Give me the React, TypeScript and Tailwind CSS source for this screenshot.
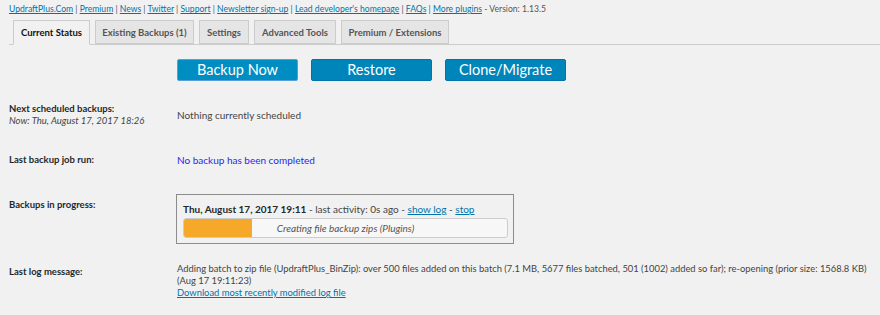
const links = [
  "UpdraftPlus.Com",
  "Premium",
  "News",
  "Twitter",
  "Support",
  "Newsletter sign-up",
  "Lead developer's homepage",
  "FAQs",
  "More plugins",
];

const tabs = [
  { label: "Current Status", w: "w-[77px]" },
  { label: "Existing Backups (1)", w: "w-[99px]" },
  { label: "Settings", w: "w-[50px]" },
  { label: "Advanced Tools", w: "w-[82px]" },
  { label: "Premium / Extensions", w: "w-[108px]" },
];

export default function App() {
  return (
    <div
      className="w-[880px] h-[315px] overflow-hidden bg-[#f1f1f1] text-[#444] text-[10px] leading-[12px]"
      style={{ fontFamily: 'Lato, "Open Sans", sans-serif' }}
    >
      <div className="pl-[9px] pt-[3px] text-[8.6px] text-[#555]">
        {links.map((l, i) => (
          <span key={l}>
            {i > 0 && <span className="text-[#555]"> | </span>}
            <a className="text-[#0073aa] underline">{l}</a>
          </span>
        ))}
        <span> - Version: 1.13.5</span>
      </div>

      <div className="ml-[9px] mt-[5px] flex items-end gap-[5px] border-b border-[#ccc] pl-[4px]">
        {tabs.map((t, i) => (
          <div
            key={t.label}
            className={
              t.w +
              (i === 0
                ? " -mb-px h-[25px] border border-[#ccc] border-b-[#f1f1f1] bg-[#f1f1f1] pt-[6px] text-center text-[9.5px] font-bold text-[#111]"
                : " h-[24px] border border-[#ccc] bg-[#e5e5e5] pt-[6px] text-center text-[9.5px] font-bold text-[#555]")
            }
          >
            {t.label}
          </div>
        ))}
      </div>

      <div className="mt-[14px] flex gap-[13px] pl-[177px]">
        {["Backup Now", "Restore", "Clone/Migrate"].map((b, i) => (
          <button
            key={b}
            className={
              "h-[22px] w-[121px] rounded-[2px] border text-[14.5px] leading-[20px] text-white " +
              (i === 0
                ? "border-[#5b9dd9] bg-[#008ec2]"
                : "border-[#0073aa] bg-[#0085ba]")
            }
          >
            {b}
          </button>
        ))}
      </div>

      <div className="mt-[22px] flex pl-[9px]">
        <div className="w-[168px] shrink-0">
          <div className="text-[9.5px] font-bold text-[#23282d]">Next scheduled backups:</div>
          <div className="text-[9.5px] italic text-[#444]">Now: Thu, August 17, 2017 18:26</div>
        </div>
        <div className="pt-[6px]">Nothing currently scheduled</div>
      </div>

      <div className="mt-[27px] flex pl-[9px]">
        <div className="w-[168px] shrink-0 text-[9.5px] font-bold text-[#23282d]">Last backup job run:</div>
        <div className="text-[#2828f0]">No backup has been completed</div>
      </div>

      <div className="mt-[28px] flex pl-[9px]">
        <div className="w-[167px] shrink-0 pt-[5px] text-[9.5px] font-bold text-[#23282d]">Backups in progress:</div>
        <div className="h-[50px] w-[338px] border border-[#8c8c8c] px-[6px] pt-[8px]">
          <div>
            <span className="font-bold text-[#23282d]">Thu, August 17, 2017 19:11</span>
            <span> - last activity: 0s ago - </span>
            <a className="text-[#0073aa] underline">show log</a>
            <span> - </span>
            <a className="text-[#0073aa] underline">stop</a>
          </div>
          <div className="relative mt-[3px] h-[20px] w-[325px] overflow-hidden rounded-[3px] border border-[#ccc] bg-[#f7f7f7]">
            <div className="absolute left-0 top-0 h-full w-[68px] bg-[#f6a828]" />
            <div className="relative text-center italic leading-[18px] text-[#555]">
              Creating file backup zips (Plugins)
            </div>
          </div>
        </div>
      </div>

      <div className="mt-[19px] flex pl-[9px]">
        <div className="w-[168px] shrink-0 pt-[3px] text-[9.5px] font-bold text-[#23282d]">Last log message:</div>
        <div className="text-[9.4px]">
          <div className="whitespace-nowrap">
            Adding batch to zip file (UpdraftPlus_BinZip): over 500 files added on this batch (7.1 MB, 5677 files batched, 501 (1002) added so far); re-opening (prior size: 1568.8 KB)
          </div>
          <div>(Aug 17 19:11:23)</div>
          <a className="text-[#0073aa] underline">Download most recently modified log file</a>
        </div>
      </div>
    </div>
  );
}
